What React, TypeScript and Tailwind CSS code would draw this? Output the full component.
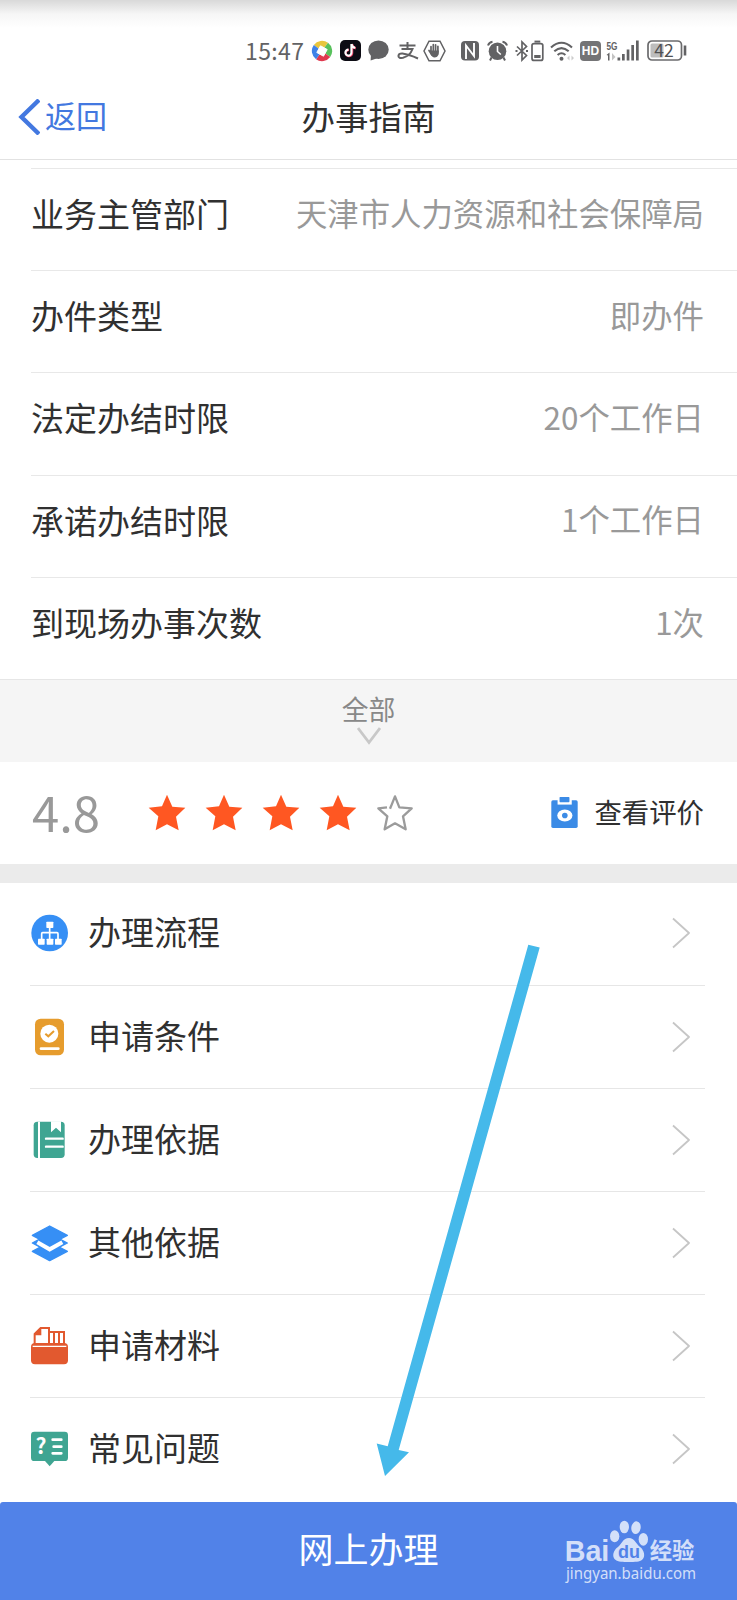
import * as React from 'react'
import { clsx } from 'clsx'

interface IconProps {
  className?: string
}

const infoRows = [
  { label: '业务主管部门', value: '天津市人力资源和社会保障局' },
  { label: '办件类型', value: '即办件' },
  { label: '法定办结时限', value: '20个工作日' },
  { label: '承诺办结时限', value: '1个工作日' },
  { label: '到现场办事次数', value: '1次' },
]

const menuItems = [
  { label: '办理流程', Icon: FlowIcon },
  { label: '申请条件', Icon: ConditionIcon },
  { label: '办理依据', Icon: BookIcon },
  { label: '其他依据', Icon: LayersIcon },
  { label: '申请材料', Icon: FolderIcon },
  { label: '常见问题', Icon: FaqIcon },
]

function FlowIcon({ className }: IconProps) {
  return (
    <svg className={className} viewBox="0 0 120 120">
      <circle cx="59" cy="60" r="55" fill="#368ff5" />
      <path d="M59 40V80M35 80V62Q35 59 38 59H81Q84 59 84 62V80" fill="none" stroke="#fff" strokeWidth="5" />
      <g fill="#fff">
        <rect x="49" y="26" width="21" height="19" rx="2" />
        <rect x="24" y="77" width="20" height="18" rx="2" />
        <rect x="50" y="77" width="20" height="18" rx="2" />
        <rect x="75" y="77" width="20" height="18" rx="2" />
      </g>
    </svg>
  )
}

function ConditionIcon({ className }: IconProps) {
  return (
    <svg className={className} viewBox="0 0 120 120">
      <rect x="15" y="5" width="87" height="110" rx="17" fill="#e69c2d" />
      <circle cx="58" cy="50" r="27" fill="#fff" />
      <path d="M46 50L55 58L72 42" fill="none" stroke="#e69c2d" strokeWidth="6" />
      <path d="M33 95H85" stroke="#fff" strokeWidth="8" strokeLinecap="round" />
    </svg>
  )
}

function BookIcon({ className }: IconProps) {
  return (
    <svg className={className} viewBox="0 0 120 120">
      <rect x="11" y="5" width="93" height="109" rx="11" fill="#3fa592" />
      <path d="M27 5V114" stroke="#fff" strokeWidth="6" />
      <path d="M63 4H93V37L78 23L63 37Z" fill="#fff" />
      <path d="M48 56H98M48 80H98" stroke="#fff" strokeWidth="7" strokeLinecap="round" />
    </svg>
  )
}

function LayersIcon({ className }: IconProps) {
  return (
    <svg className={className} viewBox="0 0 120 120">
      <g fill="#368ff5" stroke="#368ff5" strokeWidth="4" strokeLinejoin="round">
        <path d="M59 57L112 85L59 113L7 85Z" />
        <path d="M59 32L112 60L59 88L7 60Z" />
        <path d="M22 58L59 79L97 58" fill="none" stroke="#fff" strokeWidth="12" strokeLinejoin="miter" />
        <path d="M59 9L112 37L59 65L7 37Z" />
      </g>
    </svg>
  )
}

function FolderIcon({ className }: IconProps) {
  return (
    <svg className={className} viewBox="0 0 120 120">
      <path d="M14 54V24L32 6H57V54M57 18H102V54M72 18V54M87 18V54" fill="none" stroke="#e2592f" strokeWidth="6" />
      <path d="M14 28V22L30 6H34V28Z" fill="#e2592f" />
      <rect x="3" y="51" width="111" height="64" rx="12" fill="#e2592f" />
      <path d="M8 61H109" stroke="#fff" strokeWidth="4" />
    </svg>
  )
}

function FaqIcon({ className }: IconProps) {
  return (
    <svg className={className} viewBox="0 0 120 120">
      <rect x="3" y="8" width="111" height="88" rx="10" fill="#3fa592" />
      <path d="M43 94H75L59 112Z" fill="#3fa592" />
      <text x="33" y="75" textAnchor="middle" fill="#fff" fontSize="64" fontWeight="700" fontFamily="Noto Sans CJK SC, sans-serif">
        ?
      </text>
      <path d="M68 32H94M71 53H94M68 73H94" stroke="#fff" strokeWidth="8" strokeLinecap="round" />
    </svg>
  )
}

function ChevronRight({ className }: IconProps) {
  return (
    <svg className={className} viewBox="0 0 18 32" fill="none" stroke="#c6c6c6" strokeWidth={1.8} strokeLinejoin="round">
      <path d="M1 1.5L17 16L1 30.5" />
    </svg>
  )
}

function Star({ filled }: { filled: boolean }) {
  return (
    <svg className="h-10 w-10" viewBox="0 0 120 120">
      {filled ? (
        <path d="M60 5L76 41L115 44L87 71L95 112L60 94L26 112L34 70L5 44L45 40Z" fill="#ff5722" />
      ) : (
        <path
          d="M45 47L48 40L60 10L73 43L110 46L84 70L92 109L60 91L29 109L37 70L10 46L36 43"
          fill="none"
          stroke="#9b9b9b"
          strokeWidth="7"
          strokeLinejoin="round"
        />
      )}
    </svg>
  )
}

function StatusBar() {
  return (
    <div className="flex h-[79px] items-center bg-linear-to-b from-[#d9d9d9] via-[#f6f6f6] via-[14px] to-white to-[28px] pt-[22px] pl-[245px] text-[#626264]">
      <span className="w-[66px] text-[23px] leading-none tracking-[0.4px]">15:47</span>

      <svg className="h-[22px] w-[22px]" viewBox="0 0 22 22">
        <path d="M11 11L2.8 5A10.2 10.2 0 0 1 17 2.8Z" fill="#e9c63e" />
        <path d="M11 11L17 2.8A10.2 10.2 0 0 1 19.2 17Z" fill="#58c15c" />
        <path d="M11 11L19.2 17A10.2 10.2 0 0 1 5 19.2Z" fill="#e0394f" />
        <path d="M11 11L5 19.2A10.2 10.2 0 0 1 2.8 5Z" fill="#3f82e8" />
        <path d="M9.5 5.8L16.2 9.5L12.5 16.2L5.8 12.5Z" fill="#fff" stroke="#fff" strokeLinejoin="round" />
      </svg>

      <svg className="ml-[7px] h-[21px] w-[21px]" viewBox="0 0 21 21">
        <rect width="21" height="21" rx="5" fill="#0d0c14" />
        <g fill="none" strokeWidth="2.1">
          <path d="M12.2 4V12.7A3.2 3.2 0 1 1 9 9.9M12.2 4.5Q13 7.8 15.8 8.4" stroke="#f0446b" />
          <path d="M11.4 4V12.4A3 3 0 1 1 8.4 9.6M11.4 4Q12 7.4 15.2 7.8" stroke="#fff" />
        </g>
      </svg>

      <svg className="ml-[7px] h-[21px] w-[21px]" viewBox="0 0 21 21" fill="#626264">
        <ellipse cx="10.5" cy="9.7" rx="10.2" ry="9.3" />
        <path d="M3 14L2.6 20.5L10 18Z" />
      </svg>

      <svg className="ml-[8px] h-[20px] w-[22px]" viewBox="0 0 22 20" fill="none" stroke="#626264" strokeWidth="2">
        <path d="M2.5 4.5H18.5M10.5 1V7.8M4.5 8H15.5Q13 15 6 16.8Q1.5 17.5 1.4 15Q1.6 12.4 5.5 12.6Q12 13.5 21 17.5" />
      </svg>

      <svg className="ml-[4px] h-[22px] w-[23px]" viewBox="0 0 23 22">
        <path d="M6 1.2H17L22 11L17 20.8H6L1 11Z" fill="none" stroke="#626264" strokeWidth="1.5" />
        <path
          d="M8 12V6.5M10.3 11V4.6M12.6 11V4.8M14.9 12V6.3M6 10.5L9 15"
          stroke="#626264"
          strokeWidth="1.7"
          strokeLinecap="round"
        />
        <path d="M7.2 10.5H15.8V14Q14.5 17.5 11.5 17.5Q9 17.5 7.2 13.5Z" fill="#626264" />
      </svg>

      {/* NFC */}
      <svg className="ml-[15px] h-[20px] w-[18px]" viewBox="0 0 18 20">
        <rect width="18" height="19.5" rx="4" fill="#626264" />
        <path d="M5 18V4.5L13 15V2" fill="none" stroke="#fff" strokeWidth="1.9" />
      </svg>

      {/* Alarm */}
      <svg className="ml-[8px] h-[22px] w-[21px]" viewBox="0 0 21 22" fill="none" stroke="#626264">
        <circle cx="10.5" cy="11.2" r="8.8" fill="#626264" stroke="none" />
        <path d="M1 5.5Q2 2.2 5.5 1.7M15.5 1.7Q19 2.2 20 5.5M4.5 17.5L3 20.5M16.5 17.5L18 20.5" strokeWidth="2" />
        <path d="M10.5 6V11.5L13.8 14.5" stroke="#fff" strokeWidth="1.6" />
      </svg>

      {/* Bluetooth with device battery */}
      <svg className="ml-[7px] h-[22px] w-[29px]" viewBox="0 0 29 22" fill="none" stroke="#626264" strokeWidth="1.7">
        <path d="M2 6.5L11.5 15.5L7 20V2L11.5 6.5L2 15.5" />
        <path d="M0.5 11H2.5M11 11H13" strokeWidth="2" />
        <rect x="17" y="3.6" width="10.8" height="16.8" rx="2" />
        <path d="M19.5 1.6H25.3" strokeWidth="2" />
        <path d="M19.2 16.5H25.6" strokeWidth="3" />
      </svg>

      {/* Wi-Fi */}
      <svg className="ml-[6px] h-[22px] w-[25px]" viewBox="0 0 25 22" fill="none" stroke="#626264" strokeWidth="2.1">
        <path d="M1 7.5Q11.5 -2 22 7.5M4.3 11.3Q11.5 4.8 18.7 11.3M7.6 15Q11.5 11.5 15.4 15" />
        <circle cx="11.5" cy="18.7" r="2" fill="#626264" stroke="none" />
        <path d="M19.5 15.5L17 18L19.5 20.5ZM21.5 15.5L24 18L21.5 20.5Z" fill="#ccc" stroke="none" />
      </svg>

      <span className="ml-[5px] flex h-[20px] w-[21px] items-center justify-center rounded-[4px] bg-[#747476] font-['Liberation_Sans',sans-serif] text-[12px] leading-none font-bold text-white">
        HD
      </span>

      {/* 5G signal */}
      <svg className="ml-[5px] h-[22px] w-[34px] overflow-visible" viewBox="0 0 34 22" fill="#626264">
        <text x="0.5" y="9.5" fontSize="11.5" fontWeight="700" textLength="11" lengthAdjust="spacingAndGlyphs" fontFamily="Liberation Sans, sans-serif">
          5G
        </text>
        <path d="M0.5 15L3.5 12.5V20.5H2V15.5Z" />
        <path d="M6 13V20.5L9.5 17Z" fill="#c4c4c4" />
        <rect x="11.5" y="17.5" width="2.7" height="3" />
        <rect x="16" y="14" width="2.7" height="6.5" />
        <rect x="20.7" y="9.5" width="2.7" height="11" />
        <rect x="25.3" y="5" width="2.7" height="15.5" />
        <rect x="30" y="0.5" width="2.7" height="20" />
      </svg>

      <svg className="ml-[7px] h-[21px] w-[40px] overflow-visible" viewBox="0 0 40 21">
        <rect x="1" y="1" width="33.5" height="19" rx="4" fill="none" stroke="#6b6b6d" strokeWidth="1.7" />
        <rect x="3.5" y="3.5" width="13" height="14" rx="1.5" fill="#bdbdbd" />
        <path d="M38 5.5V15.5" stroke="#626264" strokeWidth="2.6" />
        <text x="17" y="16.7" textAnchor="middle" fontSize="17.5" fill="#505052">
          42
        </text>
      </svg>
    </div>
  )
}

function Header() {
  return (
    <header className="grid h-[81px] grid-cols-[1fr_auto_1fr] items-center border-b border-[#e2e2e2] pb-[5px]">
      <div className="flex items-center pl-[17px] text-[#4378e0]">
        <svg className="h-[36px] w-[23px]" viewBox="0 0 23 36" fill="none" stroke="currentColor" strokeWidth="4.4">
          <path d="M22 1L4.5 18L22 35" />
        </svg>
        <span className="ml-[5px] pb-[4px] text-[31px] leading-none">返回</span>
      </div>
      <h1 className="pb-[2px] text-[33.5px] leading-none">办事指南</h1>
    </header>
  )
}

function InfoList() {
  return (
    <section className="pt-[8px]">
      {infoRows.map(({ label, value }) => (
        <div
          key={label}
          className="ml-[31px] flex h-[102.2px] items-center justify-between border-t border-[#e8e8e8] pr-[33px] pb-[12px]"
        >
          <span className="text-[33px] leading-none">{label}</span>
          <span className="pb-[2px] text-[31.4px] leading-none text-[#999]">{value}</span>
        </div>
      ))}
    </section>
  )
}

function Rating() {
  return (
    <section className="flex h-[102px] items-center pr-[33px] pl-[32px]">
      <span className="w-[115px] pb-[5px] text-[49px] leading-none text-[#999]">4.8</span>
      <div className="flex gap-[17px]">
        {[1, 2, 3, 4, 5].map((n) => (
          <Star key={n} filled={n <= 4} />
        ))}
      </div>
      <div className="ml-auto flex items-center">
        <svg className="mr-[16px] mb-[1px] h-[31px] w-[27px]" viewBox="0 0 80 94">
          <rect y="10" width="80" height="84" rx="5" fill="#3b8be6" />
          <rect x="19" y="8" width="43" height="15" fill="#fff" />
          <rect x="25" width="30" height="16" rx="2" fill="#3b8be6" />
          <ellipse cx="41" cy="56" rx="23" ry="18" fill="#fff" />
          <circle cx="41" cy="56" r="8.5" fill="#3b8be6" />
        </svg>
        <span className="pb-[2px] text-[27.4px] leading-none">查看评价</span>
      </div>
    </section>
  )
}

function Watermark({ className }: IconProps) {
  return (
    <svg className={className} viewBox="0 0 402 201" fill="#fff" fillOpacity="0.75">
      <text x="5" y="130" fontSize="90" fontWeight="700" fontFamily="Liberation Sans, sans-serif" textLength="134" lengthAdjust="spacingAndGlyphs">
        Bai
      </text>
      <ellipse cx="155" cy="55" rx="14" ry="18" />
      <ellipse cx="184" cy="27" rx="14" ry="19" />
      <ellipse cx="219" cy="29" rx="14" ry="19" transform="rotate(10 219 29)" />
      <ellipse cx="241" cy="64" rx="14" ry="19" />
      <path d="M198 60C214 60 220 78 232 88C248 101 250 130 222 131C208 132 186 132 174 131C144 130 146 101 164 88C176 78 180 60 198 60Z" />
      <text x="198" y="119" textAnchor="middle" fontSize="54" fontWeight="700" fill="#5182e8" fillOpacity="1" fontFamily="Liberation Sans, sans-serif">
        du
      </text>
      <text x="260" y="124" fontSize="67" fontWeight="700" fontFamily="Noto Sans CJK SC, sans-serif">
        经验
      </text>
      <text x="9" y="182" fontSize="46" fontFamily="Noto Sans, sans-serif" textLength="390" lengthAdjust="spacingAndGlyphs">
        jingyan.baidu.com
      </text>
    </svg>
  )
}

export default function App() {
  return (
    <div className="relative flex h-[1600px] w-[737px] flex-col overflow-hidden bg-white font-['Noto_Sans_CJK_SC',sans-serif] text-[#303030]">
      <StatusBar />
      <Header />
      <InfoList />

      <div className="flex h-[83px] flex-col items-center border-t border-[#e6e6e6] bg-[#f5f5f5] pt-[16px] text-[#888]">
        <span className="text-[26.8px] leading-none">全部</span>
        <svg className="mt-[4px] h-[18px] w-[24px]" viewBox="0 0 24 18" fill="none" stroke="#c8c8c8" strokeWidth="2.8">
          <path d="M1 1L12 15.5L23 1" />
        </svg>
      </div>

      <Rating />
      <div className="h-[19px] bg-[#ebebeb]" />

      <nav className="flex-1">
        {menuItems.map(({ label, Icon }, index) => (
          <div
            key={label}
            className={clsx(
              'mr-[32px] ml-[30px] flex h-[103.1px] items-center pr-[15px] pb-[1px]',
              index < menuItems.length - 1 && 'border-b border-[#e6e6e6]'
            )}
          >
            <Icon className="h-10 w-10" />
            <span className="ml-[18px] pb-[3px] text-[33px] leading-none">{label}</span>
            <ChevronRight className="ml-auto h-[32px] w-[18px]" />
          </div>
        ))}
      </nav>

      <button className="h-[98px] rounded-t-[3px] bg-[#5182e8] pb-[7px] text-[35px] leading-none text-white">网上办理</button>
      <Watermark className="absolute top-[1518px] left-[563px] h-[67px] w-[134px] overflow-visible" />

      {/* Pointer towards the submit button */}
      <svg className="pointer-events-none absolute top-[940px] left-[370px] h-[540px] w-[180px]" viewBox="370 940 180 540">
        <path d="M528.3 944.8L539.7 947.5L398.7 1450L409 1452.3L385 1476L376.7 1443.5L387.7 1446.2Z" fill="#45b9ea" />
      </svg>
    </div>
  )
}
